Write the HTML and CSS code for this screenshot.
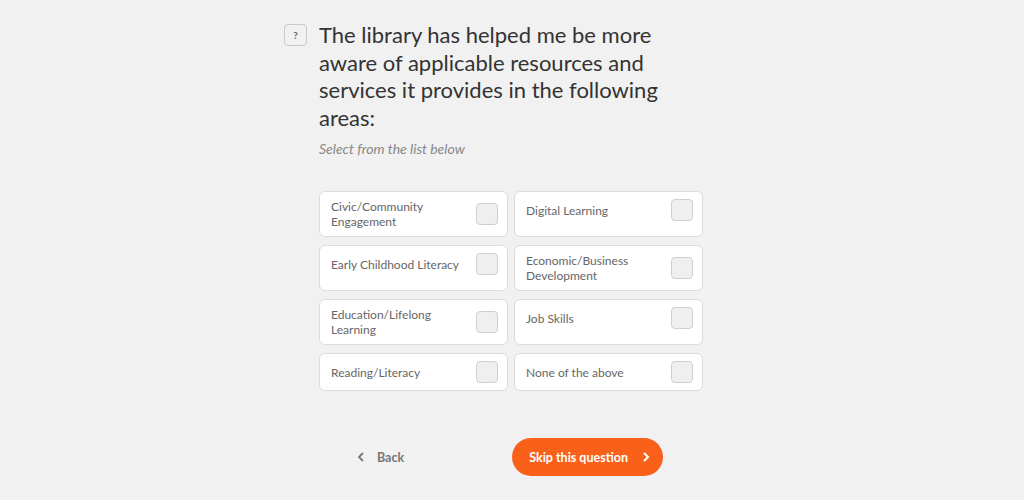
FILE: index.html
```html
<!DOCTYPE html>
<html lang="en">

<head>
    <meta charset="UTF-8">
    <meta name="viewport" content="width=device-width, initial-scale=1.0">
    <title>Survey Question</title>
    <link rel="stylesheet" href="styles.css">
</head>

<body>
    <section class="question">
        <div class="question-head">
            <span class="help">?</span>
            <h1>The library has helped me be more aware of applicable resources and services it provides in the following areas:</h1>
        </div>
        <p class="hint">Select from the list below</p>

        <div class="options">
            <label class="option"><div class="option-row"><span>Civic/Community Engagement</span><input type="checkbox"></div></label>
            <label class="option"><div class="option-row"><span>Digital Learning</span><input type="checkbox"></div></label>
            <label class="option"><div class="option-row"><span>Early Childhood Literacy</span><input type="checkbox"></div></label>
            <label class="option"><div class="option-row"><span>Economic/Business Development</span><input type="checkbox"></div></label>
            <label class="option"><div class="option-row"><span>Education/Lifelong Learning</span><input type="checkbox"></div></label>
            <label class="option"><div class="option-row"><span>Job Skills</span><input type="checkbox"></div></label>
            <label class="option"><div class="option-row"><span>Reading/Literacy</span><input type="checkbox"></div></label>
            <label class="option"><div class="option-row"><span>None of the above</span><input type="checkbox"></div></label>
        </div>

        <div class="nav">
            <button class="back">
                <svg width="8" height="10" viewBox="0 0 8 10"><path d="M6 1 L2 5 L6 9" fill="none" stroke="#777" stroke-width="1.8"/></svg>
                Back
            </button>
            <button class="skip">
                Skip this question
                <svg width="8" height="10" viewBox="0 0 8 10"><path d="M2 1 L6 5 L2 9" fill="none" stroke="#fff" stroke-width="2"/></svg>
            </button>
        </div>
    </section>
</body>

</html>
```

FILE: styles.css
```css
/* CSS styles */
body {
    font-family: 'Lato', sans-serif;
    background-color: #f1f1f1;
    margin: 0;
    padding: 0;
}

.question {
    width: 386px;
    margin: 0 auto;
    padding-top: 21px;
}

.question-head {
    position: relative;
}

.help {
    position: absolute;
    left: -35px;
    top: 3px;
    width: 21px;
    height: 20px;
    border: 1px solid #c8c8c8;
    border-radius: 4px;
    font-size: 10px;
    font-weight: bold;
    color: #666;
    display: flex;
    justify-content: center;
    align-items: center;
}

h1 {
    margin: 0;
    font-size: 22px;
    line-height: 27.6px;
    font-weight: 400;
    color: #333;
    width: 350px;
}

.hint {
    margin: 9px 0 0;
    font-size: 14px;
    line-height: 18px;
    font-style: italic;
    color: #888;
}

.options {
    display: grid;
    grid-template-columns: 1fr 1fr;
    gap: 8px 6px;
    width: 384px;
    margin-top: 33px;
}

.option {
    display: flex;
    align-items: flex-start;
    background-color: #ffffff;
    border: 1px solid #dcdcdc;
    border-radius: 6px;
    padding: 7px 9px 7px 11px;
}

.option-row {
    flex: 1;
    display: flex;
    align-items: center;
    justify-content: space-between;
    font-size: 12px;
    line-height: 15px;
    color: #666;
}

.option-row span {
    flex: 1;
    padding-right: 10px;
}

.option-row input {
    appearance: none;
    margin: 0;
    width: 22px;
    height: 22px;
    border: 1px solid #cfcfcf;
    border-radius: 4px;
    background-color: #efefef;
}

.nav {
    display: flex;
    justify-content: center;
    align-items: center;
    gap: 108px;
    margin-top: 47px;
    padding-right: 4px;
}

button {
    font-family: 'Lato', sans-serif;
    font-weight: bold;
    font-size: 12.5px;
    border: none;
    cursor: pointer;
}

.back {
    background: none;
    color: #777;
    padding: 0;
    display: flex;
    align-items: center;
    gap: 12px;
}

.skip {
    background-color: #f9611b;
    color: #ffffff;
    height: 38px;
    width: 151px;
    border-radius: 19px;
    display: flex;
    align-items: center;
    justify-content: center;
    gap: 14px;
    padding: 0 0 0 4px;
}
```
